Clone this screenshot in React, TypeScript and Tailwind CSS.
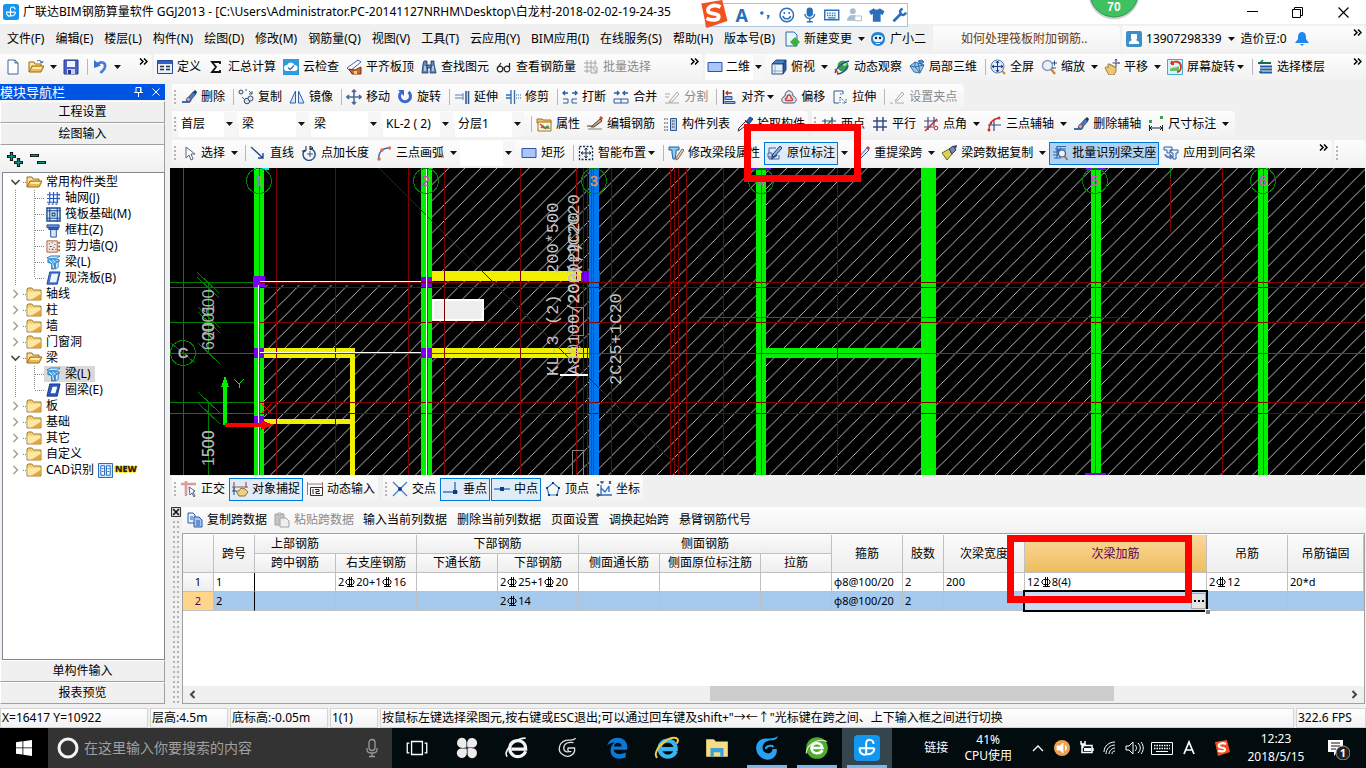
import type { ReactNode } from "react";

/* ---------- 16 × 16 icons ---------- */

const navy = "#1f3f7f";
const brush = (
  <g>
    <path d="M1 13h7l2-2" stroke="#3a6ea5" strokeWidth="2" fill="none" />
    <path d="M5 11l7-8 3 2-7 8z" fill="#4a7ab8" stroke={navy} strokeWidth=".8" />
    <path d="M5 11l2-3 3 2-2 3z" fill="#e8a0a0" stroke={navy} strokeWidth=".6" />
    <path d="M12 3l2-2 2 2-1 2z" fill="#203050" />
  </g>
);
const pencil = (
  <g>
    <path d="M5 12l8-9 2 2-8 8-3 1z" fill="#e8e8f4" stroke="#3a5a9a" strokeWidth="1" />
    <path d="M12 3l2-2 2 2-1 2z" fill="#d04030" />
  </g>
);
const beam = (
  <g stroke="#1b6fb8" strokeWidth=".9">
    <path d="M1 3l4-2h10l-4 3H2z" fill="#bfe0f8" />
    <path d="M2 5h12v2h-3l-2 3v5H6V9L2 8z" fill="#5aaee8" />
    <path d="M3 5l4 4M7 5l3 3M11 5l2 2M7 10l1.500 4" stroke="#fff" strokeWidth=".9" />
    <path d="M10 9l3-2v6l-3 2z" fill="#d8eefc" />
  </g>
);
const slab = (
  <g>
    <path d="M4 1h11l-3 13H1z" fill="#4a78d0" stroke="#20409a" />
    <path d="M6 3h7l-2 9H4z" fill="#eef5ff" />
  </g>
);
const folder = (
  <g>
    <path d="M1 4V3l1-1h4l1.500 2H15v10H1z" fill="#f3cf6e" stroke="#94702c" strokeWidth=".9" />
    <path d="M1.500 5.500H14.500V9L5 13.500H1.500z" fill="#fbe6a2" />
    <path d="M14.500 8v5.500H6z" fill="#e3a43a" />
  </g>
);
const folderOpen = (
  <g>
    <path d="M1 13V3h5l1 2h6v2" fill="#fbe39a" stroke="#9a6d1c" />
    <path d="M1 13l3-6h12l-3 6z" fill="#f0b94a" stroke="#9a6d1c" />
    <path d="M5 8h9l-1 2H4z" fill="#fdeeb5" />
  </g>
);
const sogou = (
  <g>
    <path d="M1 2l12-2 3 12-12 4z" fill="#f4511e" />
    <path d="M12 4C8 2 4 4 5 6.500c1 2 6 .5 6 3 0 2-4 2.500-7 1" fill="none" stroke="#fff" strokeWidth="2.200" />
  </g>
);
const ggj = (
  <g>
    <rect width="16" height="16" rx="2.500" fill="#1296f0" />
    <path d="M7.500 12.500V5c0-3 4.500-2.500 4.500.5M3 8.200h9.500M3.500 8.200c-.5 3.500 3 4.500 4 3.500 2 .5 5-.5 5-3.500" fill="none" stroke="#fff" strokeWidth="1.200" />
  </g>
);

const ICONS: Record<string, ReactNode> = {
  ggj,
  sogou,
  newdoc: <path d="M3 1h7l3 3v11H3zM10 1v3h3" fill="#fff" stroke="#3a62a0" />,
  open: (
    <g>
      {folderOpen}
      <path d="M9 2c2-1 4-1 5 2m0 0l-2-1m2 1l1-2" fill="none" stroke="#405a80" />
    </g>
  ),
  save: (
    <g>
      <path d="M1 1h14v14H1z" fill="#4a62c8" stroke="#26368c" />
      <path d="M4 2h8v6H4z" fill="#f0f4ff" />
      <path d="M4 10h8v5H4z" fill="#c8d2f4" />
      <path d="M5 11h3v4H5z" fill="#26368c" />
    </g>
  ),
  undo: (
    <g>
      <path d="M5 5.500C8 2 14 3 13 8c-.5 3-3 4-4.500 6" fill="none" stroke="#4a7ad8" strokeWidth="2.600" />
      <path d="M2 1v8l7-2.500z" fill="#3d6fd0" />
    </g>
  ),
  define: (
    <g>
      <path d="M.5 1.500h15v13H.5z" fill="#e6eefc" stroke="#24489c" />
      <path d="M1 2h14v3H1z" fill="#2f62c8" />
      <path d="M3 7.500h4M3 10.500h4M9 7.500h4M9 10.500h4" stroke="#333" strokeWidth="1.500" />
    </g>
  ),
  sigma: <path d="M12 5V3H4l4 5-4 5h8v-2" fill="none" stroke="#111" strokeWidth="1.800" />,
  cloud: (
    <g>
      <path d="M0 0h16v16H0z" fill="#2d9be0" />
      <path d="M4 12a3 3 0 010-6 4 4 0 017.500 0 3 3 0 010 6z" fill="#fff" />
      <path d="M5 8.500l2.200 2L11 6.500" fill="none" stroke="#2d7bc0" strokeWidth="1.400" />
    </g>
  ),
  aligntop: (
    <g>
      <path d="M1 9L12 1l3 2L4 12z" fill="#fff" stroke="#4464a8" />
      <path d="M3 10l6 1 6-3v7H6z" fill="#c86a3a" stroke="#7a2f14" />
      <path d="M8 12h3v3H8z" fill="#f8d058" />
    </g>
  ),
  find: (
    <g fill="#5f86c0" stroke="#1d3358" strokeWidth=".8">
      <path d="M3 2h3v3l1 9H1l1-9zM10 2h3v3l2 9H9l1-9z" />
      <path d="M6 6h4v3H6z" />
      <path d="M4 7v5M12 7v5" stroke="#e8f2ff" strokeWidth="1.200" />
    </g>
  ),
  glasses: (
    <g fill="none" stroke="#222" strokeWidth="1.200">
      <circle cx="4" cy="10" r="2.800" />
      <circle cx="11" cy="10" r="2.800" />
      <path d="M6.500 9h2M13.500 9V4M1.500 9L5 4" />
    </g>
  ),
  batch: (
    <g stroke="#a5a5a5" fill="none">
      <path d="M4 1v13M8 1v8M12 1v6M1 4h13M1 8h8M1 12h6" />
      <path d="M8 8h6v6H8z" fill="#eee" />
      <path d="M10 9l3 4" />
    </g>
  ),
  blueRect: <path d="M1 3.500h14v9H1z" fill="#a9c6f7" stroke="#2f55a8" />,
  cube: (
    <g stroke="#1f3f6f" strokeWidth=".9">
      <path d="M1 5l4-4h10l-3 4z" fill="#4585c0" />
      <path d="M12 5l3-4v10l-3 4z" fill="#2c5f95" />
      <path d="M1 5h11v10H1z" fill="#e6f0f8" />
      <path d="M4 5v10M1 12h11" fill="none" stroke="#88a4c0" />
    </g>
  ),
  orbit: (
    <g>
      <circle cx="9" cy="7" r="5.500" fill="#35a04c" />
      <circle cx="10.500" cy="5" r="2" fill="#a8e8a8" />
      <path d="M1 14c1-5 8-11 14-12M3 15c4 0 9-3 11-8" fill="none" stroke="#2c4f90" strokeWidth="1.300" />
      <path d="M1 10l3 4" stroke="#c04030" strokeWidth="1.500" />
    </g>
  ),
  local3d: (
    <g stroke="#2a64a0" strokeWidth=".9">
      <path d="M1 7l5-4 9 3-4 8-6-1z" fill="#9cc8ea" />
      <path d="M6 3v5l5 6M1 7l5 1 9-2M9 4l2 9" fill="none" />
      <path d="M9 2l4-1 2 2-3 2z" fill="#4d93cc" />
    </g>
  ),
  fullview: (
    <g>
      <circle cx="7.500" cy="7.500" r="6.500" fill="#dfe9fa" stroke="#5a7ab0" />
      <path d="M7.500 2v11M2 7.500h11M6 4l1.500-2L9 4M6 11l1.500 2L9 11M4 6L2 7.500 4 9M11 6l2 1.500L11 9" fill="none" stroke="#1c3c80" />
      <path d="M12 12l3 3" stroke="#c88a30" strokeWidth="2" />
    </g>
  ),
  zoom: (
    <g>
      <circle cx="6.500" cy="6.500" r="5" fill="#e8f0fa" stroke="#8a9ab8" strokeWidth="1.400" />
      <path d="M10 10l4 5" stroke="#c88a30" strokeWidth="2.400" />
      <path d="M11 4h5M13.500 1.500v5M11 9h4" stroke="#2c4f90" />
    </g>
  ),
  pan: (
    <g>
      <path d="M1 9c1-2 2-1 3 0V5h2v1h2v1h2v1h2v4l-2 4H5z" fill="#ecc878" stroke="#98742c" strokeWidth=".9" />
      <path d="M12 0v8M8.500 4h7M11 1.500L12 0l1 1.500M14.500 3l1 1-1 1" stroke="#405070" fill="none" />
    </g>
  ),
  screenrot: (
    <g>
      <path d="M.5.500h15v15H.5z" fill="#d8f2f8" stroke="#3ab0d0" />
      <path d="M3 10c3-3 6 0 9-3v5H3z" fill="#6ac060" />
      <path d="M4 5c3-4 10-3 10 3 0 3-2 5-4 5M4 5l1-3M4 5l3 0" fill="none" stroke="#e03020" strokeWidth="1.800" />
    </g>
  ),
  floors: (
    <g fill="none">
      <path d="M1 4h13" stroke="#1c6a4c" strokeWidth="2" />
      <path d="M3 7.500h12M3 10.500h12M3 13.500h12" stroke="#1d5fa8" strokeWidth="2" />
      <path d="M2 5l4-4M5 13l-3 0" stroke="#1c6a4c" strokeWidth="1.500" />
    </g>
  ),
  brush,
  copy: (
    <g fill="#dfe8f4" stroke="#31486a">
      <circle cx="3" cy="3" r="2" />
      <circle cx="9" cy="12" r="2.800" />
      <circle cx="12.500" cy="9.500" r="2.500" />
      <path d="M7 1h2M11 2l3 3M14 2v3h-3M4 8l2 2" fill="none" strokeWidth=".9" />
    </g>
  ),
  mirror: <path d="M6.500 2v12H1zM9.500 2v12H15z" fill="#dce9fb" stroke="#2d62b0" />,
  move: (
    <path d="M8 1v14M1 8h14M6 3l2-2 2 2M6 13l2 2 2-2M3 6L1 8l2 2M13 6l2 2-2 2" fill="none" stroke="#4a6a98" strokeWidth="1.600" />
  ),
  rotate: (
    <g>
      <path d="M4 3.500A5.500 5.500 0 1011.500 3" fill="none" stroke="#3f66d0" strokeWidth="3" />
      <path d="M1 1h6v6z" fill="#3f66d0" />
    </g>
  ),
  extend: (
    <g stroke="#2f5f9c" fill="none">
      <path d="M14.500 2v13M12 2v13" strokeWidth="1.600" />
      <path d="M1 6h8M1 9h8M9 4v7" stroke="#5f7fb0" />
    </g>
  ),
  trim: (
    <g stroke="#2f6fb0" fill="none">
      <path d="M6 1v14M9.500 1v14M1 6h5M1 9h5" strokeWidth="1.300" />
      <path d="M11 6h5M11 9h5" strokeDasharray="1 1" />
    </g>
  ),
  breakk: (
    <g fill="none" stroke="#2f5f9c">
      <path d="M1 10h5v4H1M15 10h-5v4h5" />
      <path d="M1 4h5M10 4h5M3 2L1 4l2 2M13 2l2 2-2 2" strokeWidth="1.400" />
    </g>
  ),
  merge: (
    <g fill="none" stroke="#2f5f9c">
      <path d="M1 10h14v4H1zM8 10v4" />
      <path d="M1 4h5M10 4h5M4 2l2 2-2 2M12 2l-2 2 2 2" strokeWidth="1.400" />
    </g>
  ),
  split: (
    <g fill="none" stroke="#a8a8a8">
      <path d="M1 5h5M1 8h4M1 14h14M5 13l8-10 2 2-7 8z" />
    </g>
  ),
  align: (
    <g>
      <path d="M2.500 1v14" stroke="#223" strokeWidth="1.400" />
      <path d="M4 7.500h7v3H4zM4 12.500h10v2H4z" fill="#9ab8e4" stroke="#2f5596" />
      <path d="M11 4H5M7 2L5 4l2 2" fill="none" stroke="#c03028" strokeWidth="1.300" />
    </g>
  ),
  offset: (
    <g fill="none">
      <path d="M3 14c-4-2-2-6 1-7 0-7 8-7 8 0 4 1 4 6 1 7z" fill="#dde4f2" stroke="#485878" />
      <path d="M5 11.500c-1-1-1-2 1-2.500 0-4 4-4 4 0 2 .5 2 2 1 2.500z" stroke="#d04438" strokeWidth="1.400" />
    </g>
  ),
  stretch: (
    <g fill="none" stroke="#2f5f9c">
      <path d="M11 2H2v12h5M11 2v3" />
      <path d="M8 5h3M8 8l6 6M8 8v6M14 10v4h-4" strokeDasharray="1.500 1" />
    </g>
  ),
  grip: (
    <g fill="none" stroke="#aaa">
      <path d="M1 14h3M6 14h9M6 12l7-9 2 2-7 7z" />
    </g>
  ),
  props: (
    <g>
      <path d="M1 3h5l1 1h8v3H1z" fill="#f6c860" stroke="#a8701c" />
      <path d="M2 6h13v9H2z" fill="#f8f4e4" stroke="#a8701c" />
      <path d="M4 12l3-3 2 2 3-2 2 4z" fill="#3a9a50" />
      <path d="M4 8l6 5" stroke="#c84838" strokeWidth="1.500" />
    </g>
  ),
  editbar: (
    <g>
      <path d="M1 13h14" stroke="#6c8c5c" />
      <path d="M0 10h5l8-7 2 2-8 6H4" fill="#b8a890" stroke="#5a4030" />
      <path d="M12 2l2-2 2 2-1 2z" fill="#d04030" />
    </g>
  ),
  complist: (
    <g>
      <path d="M8.500 2.500h6v12h-6z" fill="#b8ccec" stroke="#2f5596" />
      <path d="M2 3h4M2 7h4M2 11h4M2 14h4M10 5h3M10 8h3M10 11h3" stroke="#333" strokeDasharray="1.500 1" />
    </g>
  ),
  pick: (
    <g>
      <path d="M3 14L1 15l1-3 7-7 3 2z" fill="#e8f0fa" stroke="#333" />
      <path d="M8 4l5 5M9 6l4-5 3 2-4 5z" fill="#2f5fb0" stroke="#203a70" />
    </g>
  ),
  twopoint: (
    <g fill="none" stroke="#334a7a">
      <path d="M4 3v12M11 1v12M1 5h14M1 11h12" strokeWidth="1.200" />
      <path d="M3 12l9-9" stroke="#2a8a3a" strokeWidth="1.400" />
    </g>
  ),
  parallel: <path d="M5 1v14M11 1v14M1 5h14M1 11h14" fill="none" stroke="#3a4a86" strokeWidth="1.500" />,
  angle: (
    <g fill="none">
      <path d="M5 1v13M11 1v9M1 5h14M1 11h10" stroke="#3a4a86" strokeWidth="1.200" />
      <path d="M2 15L14 3" stroke="#c02828" strokeWidth="1.400" />
      <circle cx="13" cy="12" r="1.800" stroke="#c02828" />
    </g>
  ),
  arcaxis: (
    <g fill="none">
      <path d="M8 4v11M2 9h13" stroke="#3a4a86" strokeWidth="1.200" />
      <path d="M3 14C3 7 6 3 13 2" stroke="#c83028" strokeWidth="1.400" />
      <g fill="#c83028">
        <circle cx="3" cy="14" r="1.500" />
        <circle cx="5" cy="7" r="1.300" />
        <circle cx="13" cy="2" r="1.500" />
      </g>
    </g>
  ),
  dim: (
    <g>
      <path d="M1 4h3v3H1zM12 0h3v3h-3z" fill="#3aa04a" />
      <path d="M1.500 9v6M14.500 9v6M2 12h12M4 10l-2 2 2 2M12 10l2 2-2 2" fill="none" stroke="#222" />
    </g>
  ),
  cursor: <path d="M5 2v11l3-3 2 5 2-1-2-5h4z" fill="#fff" stroke="#56657a" />,
  line: <path d="M1 2l12 11M13 8v5H8" fill="none" stroke="#234a8c" strokeWidth="1.400" />,
  pointlen: (
    <g fill="none" stroke="#2c5590">
      <path d="M4 5a6 6 0 105-1.500" strokeWidth="1.500" />
      <path d="M9 6v6M6 9h6" />
      <path d="M1 6h4V1M9 1v4l3-2z" stroke="#123" />
    </g>
  ),
  arc: (
    <g fill="none">
      <path d="M3 14C2 8 6 3 13 3" stroke="#3a6ab0" strokeWidth="1.400" />
      <g fill="#e06a4a">
        <circle cx="3" cy="14" r="1.700" />
        <circle cx="6" cy="5" r="1.700" />
        <circle cx="13.500" cy="3" r="1.700" />
      </g>
    </g>
  ),
  smart: (
    <g fill="none" stroke="#1a2c50">
      <path d="M1.500 1.500h13v13h-13z" strokeDasharray="2 1.500" strokeWidth="1.300" />
      <path d="M8 3v10M3 8h10M6.500 5L8 3l1.500 2M6.500 11L8 13l1.500-2M5 6.500L3 8l2 1.500M11 6.500L13 8l-2 1.500" />
    </g>
  ),
  editprop: (
    <g>
      <path d="M1 2h10v3H8v3l-1 6H5L4 8V5H1z" fill="#8ad0f4" stroke="#205a9a" />
      <path d="M8 13l6-9 2 1-6 9-2 1z" fill="#f0d4b0" stroke="#6a4030" strokeWidth=".8" />
    </g>
  ),
  insitu: (
    <g>
      <path d="M2 3h7M2 3v11h10v-4" fill="#dfe8f8" stroke="#4a6298" />
      <path d="M1 8h4v4H1z" fill="#c4d6f0" stroke="#4a6298" />
      <path d="M6 9l7-8 2 2-7 8-3 1z" fill="#7ab4e8" stroke={navy} />
      <path d="M4 14l6-4" stroke="#334a80" strokeWidth="1.600" />
    </g>
  ),
  repick: pencil,
  spanCopy: (
    <g>
      <path d="M1 8l7-4 3 5-5 6z" fill="#d8d060" stroke="#6c6820" />
      <path d="M8 4l4-3 3 4-4 4z" fill="#7a86b0" stroke="#333a60" />
      <path d="M12 1l4-1-1 4z" fill="#3a3a60" />
    </g>
  ),
  recog: (
    <g fill="none">
      <path d="M5 1.500h9M3 4h11M1 7h5M1 10h5M2 13h7M5 1v12M5 7L9 3" stroke="#2c6ab0" strokeWidth="1.200" />
      <circle cx="10" cy="8.500" r="3.500" fill="#e8f2fc" stroke="#405a80" strokeWidth="1.200" />
      <path d="M12.500 11l3 4" stroke="#b07028" strokeWidth="1.800" />
    </g>
  ),
  applyTo: (
    <g>
      <path d="M1 2h8v3H7v3H4V5H1zM8 5h7v3h-2v6h-3V8H8z" fill="#e8f4fc" stroke="#2a62a4" />
      <path d="M2 9c0 3 2 4 5 3M7 9v5l3-2z" fill="#6a8ac8" stroke="#4a68a8" />
    </g>
  ),
  ortho: (
    <g>
      <path d="M0 3h15M5 0v15" stroke="#dc9c9c" strokeWidth="2.600" />
      <path d="M8 6l6 4-2 1 2 4-1 1-2-4-2 2z" fill="#fff" stroke="#4a6484" />
    </g>
  ),
  snap: (
    <g>
      <path d="M2 1v9M14 1v6M0 6h16" stroke="#9a5c5c" strokeWidth="1.200" />
      <path d="M4 10l3 0 2-3 4 1 3 3-3 4H7z" fill="#efcf88" stroke="#907030" />
      <path d="M2 6v8M0 10h4" stroke="#205080" />
    </g>
  ),
  dynin: (
    <g>
      <path d="M.5 1v13M15.500 1v6M1 3h14" stroke="#a07878" fill="none" />
      <path d="M3.500 6.500h12v8h-12z" fill="#fff" stroke="#333" />
      <path d="M6 8v5M8 8.500h4v2H9v2h4" stroke="#222" fill="none" />
    </g>
  ),
  cross: (
    <g>
      <path d="M1 1l14 14M15 1L1 15" stroke="#3a7ac8" strokeWidth="1.200" />
      <circle cx="8" cy="8" r="2" fill="#123c80" />
    </g>
  ),
  perp: (
    <g>
      <path d="M12 1v10M0 11h15" stroke="#3a7ac8" strokeWidth="1.500" />
      <path d="M10 9h4v4h-4z" fill="#123c80" />
    </g>
  ),
  mid: (
    <g>
      <path d="M0 8h16" stroke="#3a7ac8" strokeWidth="1.500" />
      <path d="M6 6h4v4H6z" fill="#123c80" />
    </g>
  ),
  vertex: (
    <g>
      <path d="M8 2l6 5-2 7H4L2 7z" fill="none" stroke="#3a7ac8" strokeWidth="1.200" />
      <path d="M7 1h2v2H7zM1 6h2v2H1zM13 6h2v2h-2zM3 13h2v2H3zM11 13h2v2h-2z" fill="#123c80" />
    </g>
  ),
  coord: (
    <g fill="none" stroke="#2a6ac0">
      <path d="M5 4v11M2 14h14M5 7l4 4 4-6M13 5v6" strokeWidth="1.300" />
      <path d="M1 3l1 2 1-2M13 0l2 3M15 0l-2 3M1 13h2v2H1zM5 0h2v2H5z" stroke="#222" strokeWidth=".9" />
    </g>
  ),
  copydoc: (
    <g stroke="#2a58a8">
      <path d="M1 1h5l2 2v8H1z" fill="#e4efff" />
      <path d="M7 5h5l3 3v7H7z" fill="#a8c8f4" />
      <path d="M9 9h4M9 11h4M9 13h4M3 5h3M3 7h3" />
    </g>
  ),
  paste: (
    <g stroke="#a4a4a4">
      <path d="M1 2h9v11H1z" fill="#c4c4c4" />
      <path d="M4 1h3v2H4zM6 6h6l3 3v6H6z" fill="#eee" />
    </g>
  ),
  newchange: (
    <g>
      <path d="M2 1h8l3 3v11H2z" fill="#eaf5ff" stroke="#2a6aa8" />
      <path d="M11 6l2.500 2.500L11 11 8.500 8.500zM11 11l2.500 2.500L11 16l-2.500-2.500zM8.500 8.500L11 11l-2.500 2.500L6 11zM13.500 8.500L16 11l-2.500 2.500L11 11z" fill="#3fae3c" />
    </g>
  ),
  mascot: (
    <g>
      <path d="M8 1c5 0 7 3 7 7s-3 7-7 7-7-3-7-7 2-7 7-7z" fill="#1f86d8" />
      <path d="M3 7c0-4 10-4 10 0s-2 4-5 4-5 0-5-4z" fill="#e8f4ff" />
      <circle cx="6" cy="7" r="1.200" fill="#123" />
      <circle cx="10" cy="7" r="1.200" fill="#123" />
      <path d="M6 12.500h4" stroke="#fff" />
    </g>
  ),
  user: (
    <g>
      <rect width="16" height="16" rx="2" fill="#3d8fc8" />
      <path d="M5 3h6v5l-1 1 3 2v2H3v-2l3-2-1-1z" fill="#fff" />
    </g>
  ),
  bell: <path d="M8 1c4 0 4 4 4 7l3 4H1l3-4c0-3 0-7 4-7zM6 13h4l-2 2z" fill="#1e88f0" />,
  axisnet: (
    <path d="M4 1v12M8 1v12M12 1v12M1 4h14M1 8h14M1 12h12M2 14h2M6 14h2M10 14h2M14 3v2M14 7v2" fill="none" stroke="#2a58c0" strokeWidth="1.300" />
  ),
  raft: (
    <g fill="none" stroke="#1d4c90">
      <path d="M1 1h14v14H1z" fill="#d4e8fc" strokeWidth="1.500" />
      <path d="M4 4h8v8H4zM6.500 6.500h3v3h-3zM1 4h3M12 4h3M1 12h3M12 12h3M4 1v3M12 1v3M4 12v3M12 12v3" strokeWidth="1.200" />
    </g>
  ),
  column: (
    <g stroke="#2a4a90">
      <path d="M1 2h13v3H1z" fill="#6090e0" />
      <path d="M5 5h6v10H5z" fill="#d8e6fc" />
      <path d="M3 5h10v2H3z" fill="#3860b8" />
    </g>
  ),
  shear: (
    <g>
      <path d="M1 2h11v12H1z" fill="#f4e8e0" stroke="#a85838" />
      <path d="M3 5h1M6 4h1M9 6h1M4 8h2M8 9h1M3 11h1M6 11h2M10 11h1" stroke="#333" />
      <path d="M14 3v2M14 7v2M14 11v2" stroke="#b86020" strokeWidth="2" />
    </g>
  ),
  beam,
  slab,
  ringbeam: (
    <g>
      <path d="M4 1h11l-3 13H1z" fill="#2a58b8" stroke="#183880" />
      <path d="M7 4h5l-2 7H5z" fill="#fff" />
    </g>
  ),
  folder,
  folderOpen,
  cad: (
    <g>
      <path d="M.5.500h15v15H.5z" fill="#d0e8ff" stroke="#1a60b8" />
      <path d="M3 3h4v10H3zM9 3h4v10H9z" fill="#fff" stroke="#1a60b8" />
      <path d="M4 6h2M4 9h2M10 6h2M10 9h2" stroke="#1a60b8" />
    </g>
  ),
};

function Icon({ name, size = "h-4 w-4" }: { name: string; size?: string }) {
  return (
    <svg viewBox="0 0 16 16" className={`${size} shrink-0`} aria-hidden="true">
      {ICONS[name]}
    </svg>
  );
}

/* ---------- toolbar parts ---------- */

type Drop = "split" | "menu";

function Tri() {
  return (
    <svg viewBox="0 0 7 4" className="h-1 w-[7px] shrink-0" aria-hidden="true">
      <path d="M0 0h7L3.500 4z" fill="#111" />
    </svg>
  );
}

function Tool({
  icon,
  label,
  drop,
  state = "normal",
  children,
}: {
  icon?: string;
  label?: string;
  drop?: Drop;
  state?: "normal" | "checked" | "pressed" | "disabled";
  children?: ReactNode;
}) {
  const look = {
    normal: "",
    checked: "bg-[#dfebf6] ring-1 ring-inset ring-[#0078d7]",
    pressed: "bg-[#afd2f2] ring-1 ring-inset ring-[#0078d7]",
    disabled: "text-[#8a8a8a]",
  }[state];
  return (
    <div className="relative flex shrink-0 items-center">
      <button
        type="button"
        aria-label={label ?? icon}
        disabled={state === "disabled"}
        className={`flex h-[23px] items-center gap-1 whitespace-nowrap px-[3px] ${look}`}
      >
        {icon && <Icon name={icon} />}
        {label && <span>{label}</span>}
        {drop === "menu" && (
          <span className="-ml-0.5 w-[7px]">
            <Tri />
          </span>
        )}
      </button>
      {drop === "split" && (
        <button type="button" aria-label="▾" className="flex h-[23px] w-3 items-center pl-[3px]">
          <Tri />
        </button>
      )}
      {children}
    </div>
  );
}

function Sep() {
  return <span className="h-4 w-[5px] shrink-0 border-r border-[#b8b8b8]" />;
}

function Grip() {
  return (
    <span className="flex w-[3px] shrink-0 flex-col gap-0.5">
      {[0, 1, 2, 3].map((i) => (
        <span key={i} className="h-0.5 w-0.5 bg-[#b4b4b4]" />
      ))}
    </span>
  );
}

function Chevron() {
  return (
    <svg viewBox="0 0 9 7" className="mb-3 ml-auto mr-1 h-[7px] w-[9px] shrink-0" aria-hidden="true">
      <path d="M1 .5l3 3-3 3M5 .5l3 3-3 3" fill="none" stroke="#000" strokeWidth="1.500" />
    </svg>
  );
}

function Combo({ value, width, icon }: { value: string; width: string; icon?: string }) {
  return (
    <label className={`relative mr-0.5 flex h-[25px] shrink-0 items-center bg-white ${width}`}>
      {icon && (
        <span className="ml-0.5">
          <Icon name={icon} />
        </span>
      )}
      <select
        aria-label={value || "▾"}
        className="h-full w-full appearance-none bg-transparent pl-[3px] pr-3 text-xs outline-none"
      >
        <option>{value}</option>
      </select>
      <span className="pointer-events-none absolute inset-y-0 right-0 flex w-3 items-center bg-[#f6f6f6] pl-0.5">
        <Tri />
      </span>
    </label>
  );
}

function Bar({ className = "", children }: { className?: string; children: ReactNode }) {
  return (
    <div
      role="toolbar"
      className={`flex h-[26px] shrink-0 items-center gap-px rounded-r bg-linear-to-b from-[#fdfdfd] to-[#f2f2f2] ${className}`}
    >
      {children}
    </div>
  );
}

/* ---------- title and menu ---------- */

function TitleBar() {
  return (
    <header className="relative flex h-6 shrink-0 items-center bg-white">
      <span className="ml-[3px] mr-1">
        <Icon name="ggj" />
      </span>
      <h1 className="whitespace-nowrap text-xs">
        广联达BIM钢筋算量软件 GGJ2013 - [C:\Users\Administrator.PC-20141127NRHM\Desktop\白龙村-2018-02-02-19-24-35
      </h1>
      <div className="absolute left-[705px] top-[3px] flex h-6 w-[203px] items-center gap-[7px] border border-[#a9c5de] bg-white pl-7 text-[#2a6fbb]">
        <span className="w-4 text-center text-lg font-bold leading-none">A</span>
        <svg viewBox="0 0 16 16" className="h-4 w-4" fill="currentColor">
          <circle cx="5" cy="6" r="1.800" />
          <path d="M10 8h3c0 3-1 4-3 5 1-2 1-3 0-5z" />
        </svg>
        <svg viewBox="0 0 16 16" className="h-4 w-4" fill="none" stroke="currentColor" strokeWidth="1.500">
          <circle cx="8" cy="8" r="7" />
          <path d="M4 9c1 4 7 4 8 0M5.500 5v2M10.500 5v2" />
        </svg>
        <svg viewBox="0 0 16 16" className="h-4 w-4" fill="none" stroke="currentColor" strokeWidth="1.500">
          <rect x="5.500" y="1" width="5" height="8" rx="2.500" fill="currentColor" />
          <path d="M3 7c0 6 10 6 10 0M8 12v3M5 15h6" />
        </svg>
        <svg viewBox="0 0 16 16" className="h-4 w-4" fill="none" stroke="currentColor">
          <path d="M.8 3h14.400v10H.8z" strokeWidth="1.500" />
          <path d="M3 6h10M3 8.500h10" strokeDasharray="1.500 1" strokeWidth="1.400" />
          <path d="M4 11h8" strokeWidth="1.300" />
        </svg>
        <svg viewBox="0 0 16 16" className="h-4 w-4" fill="#a8bcd2">
          <circle cx="6" cy="4" r="3" />
          <path d="M0 14c0-8 12-8 12 0z" />
          <path d="M8 9h7v5H8z" fill="#fff" stroke="#a8bcd2" />
        </svg>
        <svg viewBox="0 0 16 16" className="h-4 w-4" fill="currentColor">
          <path d="M5 1c1 2 5 2 6 0l5 3-2 4-2-1v8H4V7L2 8 0 4z" />
        </svg>
        <svg viewBox="0 0 16 16" className="h-4 w-4" fill="none" stroke="currentColor">
          <path d="M1.500 14.500L9 7" strokeWidth="2.800" />
          <path d="M11 1.500c-3 1-3 3-2 5s4 2 5.500-1" strokeWidth="2.600" />
        </svg>
      </div>
      <div className="absolute left-[699px] top-0">
        <Icon name="sogou" size="h-[28px] w-[29px]" />
      </div>
      <div className="absolute right-[224px] top-0 flex h-6 w-14 justify-center">
        <svg viewBox="0 0 56 24" className="absolute inset-0 h-6 w-14">
          <circle cx="28" cy="-6" r="25.500" fill="#d2d2d2" />
          <circle cx="28" cy="-7" r="24" fill="#3fc162" stroke="#2a9a4a" />
        </svg>
        <span className="relative font-[Liberation_Sans] text-xs font-bold leading-[14px] text-white">70</span>
      </div>
      <div className="ml-auto flex items-center">
        <button type="button" aria-label="−" className="flex w-[46px] justify-center">
          <svg viewBox="0 0 11 11" className="h-[11px] w-[11px]" fill="none" stroke="#000">
            <path d="M0 4.500h11" />
          </svg>
        </button>
        <button type="button" aria-label="❐" className="flex w-[45px] justify-center">
          <svg viewBox="0 0 11 11" className="h-[11px] w-[11px]" fill="none" stroke="#000">
            <path d="M.5 2.500h8v8h-8zM2.500 2.500v-2h8v8h-2" />
          </svg>
        </button>
        <button type="button" aria-label="✕" className="flex w-[46px] justify-center">
          <svg viewBox="0 0 11 11" className="h-[11px] w-[11px]" fill="none" stroke="#000" strokeWidth="1.200">
            <path d="M.5.500l10 10M10.500.500l-10 10" />
          </svg>
        </button>
      </div>
    </header>
  );
}

const MENUS = [
  "文件(F)", "编辑(E)", "楼层(L)", "构件(N)", "绘图(D)", "修改(M)", "钢筋量(Q)",
  "视图(V)", "工具(T)", "云应用(Y)", "BIM应用(I)", "在线服务(S)", "帮助(H)", "版本号(B)",
];

function MenuBar() {
  return (
    <nav className="flex h-[29px] shrink-0 items-center">
      <div className="flex items-center gap-[11px] pl-[7px] pr-1.5">
        {MENUS.map((m) => (
          <button type="button" key={m} className="whitespace-nowrap">
            {m}
          </button>
        ))}
      </div>
      <Tool icon="newchange" label="新建变更" drop="split" />
      <Tool icon="mascot" label="广小二" />
      <Bar className="ml-1 w-[187px] pl-7">
        <a href="#help" className="whitespace-nowrap text-[#6b3a10]">
          如何处理筏板附加钢筋..
        </a>
      </Bar>
      <Bar className="ml-0.5 min-w-0 flex-1 pl-px">
        <Tool icon="user" label="13907298339" drop="split" />
        <Tool label="造价豆:0" />
        <Tool icon="bell" />
        <Chevron />
      </Bar>
    </nav>
  );
}

function MainBars() {
  return (
    <div className="flex h-[31px] shrink-0 items-start gap-0.5 overflow-hidden pt-px">
      <Bar className="w-[152px] pl-0.5">
        <Tool icon="newdoc" />
        <Tool icon="open" drop="split" />
        <Tool icon="save" />
        <Sep />
        <Tool icon="undo" drop="split" />
        <Chevron />
      </Bar>
      <Bar className="w-[549px]">
        <Tool icon="define" label="定义" />
        <Tool icon="sigma" label="汇总计算" />
        <Tool icon="cloud" label="云检查" />
        <Tool icon="aligntop" label="平齐板顶" />
        <Tool icon="find" label="查找图元" />
        <Tool icon="glasses" label="查看钢筋量" />
        <Tool icon="batch" label="批量选择" state="disabled" />
        <Chevron />
      </Bar>
      <Bar className="min-w-0 flex-1">
        <Combo value="二维" width="w-[60px]" icon="blueRect" />
        <Tool icon="cube" label="俯视" drop="split" />
        <Tool icon="orbit" label="动态观察" />
        <Tool icon="local3d" label="局部三维" />
        <Sep />
        <Tool icon="fullview" label="全屏" />
        <Tool icon="zoom" label="缩放" drop="split" />
        <Tool icon="pan" label="平移" drop="split" />
        <Tool icon="screenrot" label="屏幕旋转" drop="menu" />
        <Sep />
        <Tool icon="floors" label="选择楼层" />
        <Chevron />
      </Bar>
    </div>
  );
}

/* ---------- navigation panel ---------- */

type Node = { label: string; icon: string; level: 0 | 1; open?: boolean; last?: boolean; selected?: boolean };

const TREE: Node[] = [
  { label: "常用构件类型", icon: "folderOpen", level: 0, open: true },
  { label: "轴网(J)", icon: "axisnet", level: 1 },
  { label: "筏板基础(M)", icon: "raft", level: 1 },
  { label: "框柱(Z)", icon: "column", level: 1 },
  { label: "剪力墙(Q)", icon: "shear", level: 1 },
  { label: "梁(L)", icon: "beam", level: 1 },
  { label: "现浇板(B)", icon: "slab", level: 1, last: true },
  { label: "轴线", icon: "folder", level: 0 },
  { label: "柱", icon: "folder", level: 0 },
  { label: "墙", icon: "folder", level: 0 },
  { label: "门窗洞", icon: "folder", level: 0 },
  { label: "梁", icon: "folderOpen", level: 0, open: true },
  { label: "梁(L)", icon: "beam", level: 1, selected: true },
  { label: "圈梁(E)", icon: "ringbeam", level: 1, last: true },
  { label: "板", icon: "folder", level: 0 },
  { label: "基础", icon: "folder", level: 0 },
  { label: "其它", icon: "folder", level: 0 },
  { label: "自定义", icon: "folder", level: 0 },
  { label: "CAD识别", icon: "folder", level: 0 },
];

function TreeRow({ node }: { node: Node }) {
  if (node.level === 1) {
    return (
      <li className="flex h-4 items-center whitespace-nowrap">
        <svg viewBox="0 0 41 16" className="h-4 w-[41px] shrink-0" fill="none" stroke="#888" strokeDasharray="1 1">
          <path d={node.last ? "M12.500 0v16M31.500 0v8M32 8.500h9" : "M12.500 0v16M31.500 0v16M32 8.500h9"} />
        </svg>
        <span className={`flex h-4 items-center gap-1 pl-0.5 pr-1 ${node.selected ? "bg-[#d9d9d9]" : ""}`}>
          <Icon name={node.icon} size="h-[15px] w-[15px]" />
          {node.label}
        </span>
      </li>
    );
  }
  return (
    <li className="flex h-4 items-center whitespace-nowrap">
      <svg viewBox="0 0 23 16" className="h-4 w-[23px] shrink-0" fill="none">
        {node.open ? (
          <path d="M8.500 6l4 4 4-4" stroke="#444" strokeWidth="1.600" />
        ) : (
          <path d="M10.500 4l4 4-4 4" stroke="#a0a0a0" strokeWidth="1.500" />
        )}
        <path d="M20 8.500h3" stroke="#888" strokeDasharray="1 1" />
      </svg>
      <Icon name={node.icon} />
      <span className="pl-1">{node.label}</span>
      {node.label.startsWith("CAD") && (
        <span className="flex items-center gap-0.5 pl-1">
          <Icon name="cad" size="h-[15px] w-[15px]" />
          <b className="mb-1 text-[9px] font-black leading-[9px] text-[#222] [text-shadow:1px_0_#ffe000,-1px_0_#ffe000,0_1px_#ffe000,0_-1px_#ffe000]">
            NEW
          </b>
        </span>
      )}
    </li>
  );
}

function NavButton({ children }: { children: ReactNode }) {
  return (
    <button
      type="button"
      className="h-[22px] w-full shrink-0 border border-[#a0a0a0] border-l-white border-t-white bg-[#f0f0f0] text-center"
    >
      {children}
    </button>
  );
}

function NavPanel() {
  return (
    <aside className="flex w-[165px] shrink-0 flex-col bg-[#f0f0f0]">
      <div className="flex h-4 shrink-0 items-center bg-[#0054e3] text-[13px] leading-4 text-white">
        <h2>模块导航栏</h2>
        <svg viewBox="0 0 28 10" className="ml-auto mr-1 h-[10px] w-7" fill="none" stroke="#fff">
          <path d="M3 .500h5v5H3zM1 5.500h9M5.500 6v4M7.500 1v5M19.500 1.500l7 7M26.500 1.500l-7 7" />
        </svg>
      </div>
      <div className="flex flex-col pt-px">
        <NavButton>工程设置</NavButton>
        <NavButton>绘图输入</NavButton>
      </div>
      <div className="flex h-[27px] shrink-0 items-center border-r border-[#a0a0a0] bg-linear-to-b from-[#fcfcfc] to-[#f0f0f0] pl-[7px]">
        <svg viewBox="0 0 40 16" className="h-4 w-10" fill="none">
          <path d="M0 5.500h9M4.500 1v9M7 11.500h9M11.500 7v9M23 4.500h9M30 11.500h9" stroke="#111" strokeWidth="3.200" />
          <path d="M1 5.500h7M4.500 2v7M8 11.500h7M11.500 8v7M24 4.500h7M31 11.500h7" stroke="#00968a" strokeWidth="1.400" />
        </svg>
      </div>
      <ul className="ml-0.5 min-h-0 flex-1 overflow-hidden border border-[#828790] bg-white pt-px">
        {TREE.map((n, i) => (
          <TreeRow key={i} node={n} />
        ))}
      </ul>
      <div className="flex flex-col">
        <NavButton>单构件输入</NavButton>
        <NavButton>报表预览</NavButton>
      </div>
    </aside>
  );
}

/* ---------- drawing canvas ---------- */

const DARK_V = [106, 165, 238, 274, 350, 406, 413, 417, 441, 500, 504, 508, 516, 553, 667, 1052];
const H_LINES = [114, 119, 154, 234, 245];
const AXES: [number, string, string][] = [
  [89, "1", "#a878b8"], [256, "2", "#c050c0"], [424, "3", "#e09050"],
  [591, "4", "#d050d0"], [925, "5", "#d050d0"], [1093, "6", "#d050d0"],
];
const TICKS = [[27, 104], [27, 109], [28, 139], [28, 144], [28, 175], [28, 224], [28, 235]];

function Canvas() {
  return (
    <svg className="min-h-0 w-full flex-1 bg-black" shapeRendering="crispEdges">
      <defs>
        <pattern id="hatch" width="16.1" height="16.1" patternUnits="userSpaceOnUse" x="5">
          <path d="M0 16.100L16.100 0" stroke="#c4c4c4" strokeWidth="1" />
        </pattern>
      </defs>
      <rect x="94" y="117" width="157" height="100%" fill="url(#hatch)" />
      <rect x="262" y="0" width="100%" height="100%" fill="url(#hatch)" />

      <g fill="#f0f000">
        <rect x="262" y="103" width="150" height="10" />
        <rect x="262" y="180" width="157" height="10" />
        <rect x="94" y="180" width="91" height="10" />
        <rect x="180" y="180" width="5" height="100%" />
        <rect x="94" y="251" width="90" height="5" />
      </g>
      <g fill="#00f000">
        <rect x="84" y="0" width="10" height="100%" />
        <rect x="251" y="0" width="11" height="100%" />
        <rect x="586" y="0" width="10" height="100%" />
        <rect x="751" y="0" width="15" height="100%" />
        <rect x="921" y="0" width="10" height="100%" />
        <rect x="1088" y="0" width="10" height="100%" />
        <rect x="596" y="180" width="155" height="10" />
      </g>
      <g fill="#7a00f0">
        <rect x="83" y="108" width="12" height="11" />
        <rect x="84" y="180" width="10" height="10" />
        <rect x="84" y="248" width="10" height="8" />
        <rect x="251" y="109" width="11" height="10" />
        <rect x="251" y="180" width="11" height="10" />
        <rect x="411" y="103" width="19" height="11" />
        <rect x="581" y="0" width="20" height="2" />
        <rect x="916" y="0" width="20" height="2" />
        <rect x="915" y="305" width="21" height="2" />
      </g>
      <rect x="419" y="0" width="10" height="100%" fill="#0078f0" />
      <rect x="84" y="0" width="15" height="2" fill="#00f0f0" />
      <rect x="263" y="132" width="50" height="20" fill="#eee" stroke="#fff" strokeWidth="2" />

      <g fill="#800000">
        {DARK_V.map((x) => (
          <rect key={x} x={x} y="0" width="1" height="100%" />
        ))}
        {H_LINES.map((y) => (
          <rect key={y} x="89" y={y} width="100%" height="1" />
        ))}
        <rect x="757" y="149" width="202" height="1" />
        <rect x="1000" y="10" width="1" height="54" />
      </g>
      <path d="M209 0l307 307" stroke="#800000" />
      <g fill="#f00000">
        <rect x="89" y="0" width="1" height="100%" />
        <rect x="257" y="0" width="1" height="100%" />
        <rect x="421" y="0" width="1" height="100%" />
        <rect x="423" y="0" width="1" height="100%" />
        <rect x="591" y="0" width="1" height="100%" />
        <rect x="925" y="0" width="1" height="100%" />
        <rect x="1093" y="0" width="1" height="100%" />
        <rect x="89" y="185" width="100%" height="1" />
      </g>
      <g fill="#fff">
        <rect x="88" y="117" width="1" height="100%" />
        <rect x="256" y="0" width="1" height="100%" />
        <rect x="90" y="113" width="161" height="1" />
        <rect x="90" y="184" width="161" height="1" />
        <rect x="390" y="206" width="28" height="2" />
      </g>
      <g fill="#008000">
        {H_LINES.map((y) => (
          <rect key={y} x="0" y={y} width="84" height="1" />
        ))}
        <rect x="0" y="185" width="84" height="1" />
        <rect x="13" y="0" width="1" height="100%" />
        <rect x="38" y="114" width="1" height="72" />
        <rect x="38" y="235" width="1" height="100%" />
        <rect x="529" y="149" width="228" height="1" />
        <rect x="1000" y="0" width="1" height="10" />
      </g>
      <g fill="none" stroke="#008000">
        {TICKS.map(([x, y]) => (
          <path key={y} d={`M${x} ${y}l22 21`} />
        ))}
        {AXES.map(([x]) => (
          <circle key={x} cx={x} cy="13" r="12.500" />
        ))}
        <circle cx="13" cy="185" r="12.500" />
        <path d="M1 175l24 20" />
      </g>
      <g fill="none" stroke="#808080">
        <path d="M402.500 139.500h11v28h-11zM402.500 282.500h11v40h-11z" />
      </g>

      <g fontFamily="Liberation Sans" fontSize="14" textAnchor="middle">
        {AXES.map(([x, n, c]) => (
          <text key={n} x={x} y="18" fill={c} stroke={c} strokeWidth=".5">
            {n}
          </text>
        ))}
        <text x="13" y="190" fill="#c0c0c0" stroke="#c0c0c0" strokeWidth=".5">
          C
        </text>
      </g>
      <g fontFamily="Liberation Mono" fontSize="17" fill="#c4c4c4">
        <text transform="translate(388 208) rotate(-90)">{"KL-3\u00a0(2)\u00a0\u00a0200*500"}</text>
        <text transform="translate(409 207) rotate(-90)">{"A8@100/200(2)"}</text>
        <text transform="translate(409 136) rotate(-90)">{"2C20;2C20"}</text>
        <text transform="translate(409 108) rotate(-90)">{")+1C2C20"}</text>
        <text transform="translate(451 217) rotate(-90)">{"2C25+1C20"}</text>
      </g>
      <g fontFamily="Liberation Sans" fontSize="16" fill="#b0b0b0">
        <text transform="translate(44 182) rotate(-90)">{"600"}</text>
        <text transform="translate(44 172) rotate(-90)">{"2001"}</text>
        <text transform="translate(44 148) rotate(-90)">{"600"}</text>
        <text transform="translate(44 298) rotate(-90)">{"1500"}</text>
        <text transform="translate(44 289) rotate(-90)">{"500"}</text>
      </g>

      <rect x="53" y="218" width="4" height="39" fill="#00f000" />
      <path d="M51 219l4-11 4 11z" fill="#00f000" />
      <rect x="55" y="255" width="38" height="4" fill="#f00" />
      <path d="M91 252l13 5-13 5z" fill="#f00" />
      <path d="M64 211l5 5 5-5M69 216v4" fill="none" stroke="#00f000" />
      <path d="M92 236l9 9M101 236l-9 9" fill="none" stroke="#f00" />
    </svg>
  );
}

/* ---------- in-place table ---------- */

function Rebar() {
  return (
    <svg viewBox="0 0 12 10" className="mb-[3px] inline-block h-[10px] w-3 align-middle" fill="none" stroke="#000">
      <path d="M3.500 2.500h5l1.500 1.500v2l-1.500 1.500h-5L2 6V4zM5.500 0v9M7.500 0v9M3 9.500h7" />
    </svg>
  );
}

const TH = "border-b border-r border-[#c0c0c0] bg-linear-to-b from-[#fbfbfb] to-[#eeeeee] p-0 font-normal";
const TD = "whitespace-nowrap border-b border-r border-[#c0c0c0] p-0 pl-0.5 text-[11px] leading-[18px]";

function SpanTable() {
  return (
    <table className="w-full table-fixed border-separate border-spacing-0 text-xs leading-[18px]">
      <colgroup>
        <col className="w-[31px]" />
        <col className="w-[41px]" />
        <col className="w-[81px]" />
        <col className="w-[81px]" />
        <col className="w-[81px]" />
        <col className="w-[81px]" />
        <col className="w-[81px]" />
        <col className="w-[101px]" />
        <col className="w-[71px]" />
        <col className="w-[71px]" />
        <col className="w-[41px]" />
        <col className="w-[81px]" />
        <col className="w-[182px]" />
        <col className="w-[81px]" />
        <col />
      </colgroup>
      <thead>
        <tr className="h-[19px]">
          <th rowSpan={2} className={TH} />
          <th rowSpan={2} className={TH}>跨号</th>
          <th colSpan={2} className={`${TH} pl-4 text-left`}>上部钢筋</th>
          <th colSpan={2} className={TH}>下部钢筋</th>
          <th colSpan={3} className={TH}>侧面钢筋</th>
          <th rowSpan={2} className={TH}>箍筋</th>
          <th rowSpan={2} className={TH}>肢数</th>
          <th rowSpan={2} className={TH}>次梁宽度</th>
          <th
            rowSpan={2}
            className="relative border-b border-r border-[#c0c0c0] bg-linear-to-b from-[#fbd89a] to-[#eebd5c] p-0 font-normal text-[#5a005a]"
          >
            次梁加筋
            <span className="pointer-events-none absolute -left-[18px] top-0 z-20 h-[68px] w-[185px] border-[7px] border-[#ff0000]" />
          </th>
          <th rowSpan={2} className={TH}>吊筋</th>
          <th rowSpan={2} className={TH}>吊筋锚固</th>
        </tr>
        <tr className="h-[19px]">
          {["跨中钢筋", "右支座钢筋", "下通长筋", "下部钢筋", "侧面通长筋", "侧面原位标注筋", "拉筋"].map((h) => (
            <th key={h} className={TH}>{h}</th>
          ))}
        </tr>
      </thead>
      <tbody>
        <tr className="h-[19px]">
          <th className={`${TH} text-[11px]`}>1</th>
          <td className={`${TD} border-r-black`}>1</td>
          <td className={TD} />
          <td className={TD}>2<Rebar />20+1<Rebar />16</td>
          <td className={TD} />
          <td className={TD}>2<Rebar />25+1<Rebar />20</td>
          <td className={TD} />
          <td className={TD} />
          <td className={TD} />
          <td className={TD}>ф8@100/20</td>
          <td className={TD}>2</td>
          <td className={TD}>200</td>
          <td className={TD}>12<Rebar />8(4)</td>
          <td className={TD}>2<Rebar />12</td>
          <td className={TD}>20*d</td>
        </tr>
        <tr className="h-[19px] bg-[#a6c9ee]">
          <th className="border-b border-r border-[#c0c0c0] bg-[#ffd58c] p-0 text-[11px] font-normal text-[#5a005a]">2</th>
          <td className={`${TD} border-r-black`}>2</td>
          <td className={TD} />
          <td className={TD} />
          <td className={TD} />
          <td className={TD}>2<Rebar />14</td>
          <td className={TD} />
          <td className={TD} />
          <td className={TD} />
          <td className={TD}>ф8@100/20</td>
          <td className={TD}>2</td>
          <td className={TD} />
          <td className={`${TD} relative`}>
            <span className="absolute -inset-x-0.5 -inset-y-0.5 z-10 flex items-center border-2 border-black bg-[#c8ddf4]">
              <input aria-label="次梁加筋" className="h-full min-w-0 flex-1 bg-transparent px-0.5 outline-none" />
              <button
                type="button"
                aria-label="…"
                className="flex h-4 w-[15px] items-center justify-center gap-0.5 border border-[#a8a8a8] bg-[#e4e4e4]"
              >
                <span className="h-0.5 w-0.5 bg-black" />
                <span className="h-0.5 w-0.5 bg-black" />
                <span className="h-0.5 w-0.5 bg-black" />
              </button>
              <span className="absolute -bottom-1 -right-1 h-[5px] w-[5px] border-l border-t border-white bg-[#808080]" />
            </span>
          </td>
          <td className={TD} />
          <td className={TD} />
        </tr>
      </tbody>
    </table>
  );
}

function TablePanel() {
  return (
    <section className="flex h-[201px] shrink-0 pt-1">
      <div className="flex w-3 shrink-0 flex-col items-center">
        <button type="button" aria-label="✕" className="flex">
          <svg viewBox="0 0 10 10" className="h-[10px] w-[10px]">
            <path d="M.5.500h9v9h-9z" fill="#ddd" stroke="#333" />
            <path d="M2 2l6 6M8 2L2 8" stroke="#111" strokeWidth="1.600" />
          </svg>
        </button>
        <div className="mt-1 w-[7px] flex-1 bg-[radial-gradient(circle_at_1px_1px,#b4b4b4_1px,transparent_1.500px)] bg-[size:4px_5px]" />
      </div>
      <div className="flex min-w-0 flex-1 flex-col">
        <Bar className="pl-0.5">
          <Tool icon="copydoc" label="复制跨数据" />
          <Tool icon="paste" label="粘贴跨数据" state="disabled" />
          <div className="flex gap-1 pl-0.5">
            {["输入当前列数据", "删除当前列数据", "页面设置", "调换起始跨", "悬臂钢筋代号"].map((t) => (
              <Tool key={t} label={t} />
            ))}
          </div>
        </Bar>
        <div className="mr-px flex min-h-0 flex-1 flex-col overflow-hidden border border-[#a0a0a0] bg-white">
          <div className="min-h-0 flex-1 overflow-hidden pt-px">
            <SpanTable />
          </div>
          <div className="flex h-[17px] shrink-0 items-center bg-[#f0f0f0] px-1.5">
            <svg viewBox="0 0 7 9" className="h-[9px] w-[7px]" fill="none" stroke="#444" strokeWidth="2">
              <path d="M5.500 1L2 4.500 5.500 8" />
            </svg>
            <div className="grid h-full flex-1 grid-cols-[89fr_70fr_41fr]">
              <div className="col-start-2 h-[15px] bg-[#cdcdcd]" />
            </div>
            <svg viewBox="0 0 7 9" className="h-[9px] w-[7px]" fill="none" stroke="#444" strokeWidth="2">
              <path d="M1.500 1L5 4.500 1.500 8" />
            </svg>
          </div>
        </div>
      </div>
    </section>
  );
}

/* ---------- workspace ---------- */

function Workspace() {
  return (
    <main className="flex min-w-0 flex-1 flex-col pl-[5px]">
      <div className="flex h-[27px] shrink-0 pl-0.5">
        <Bar className="pl-0.5 pr-1">
          <Grip />
          <Tool icon="brush" label="删除" />
          <Sep />
          <Tool icon="copy" label="复制" />
          <Tool icon="mirror" label="镜像" />
          <Sep />
          <Tool icon="move" label="移动" />
          <Tool icon="rotate" label="旋转" />
          <Sep />
          <Tool icon="extend" label="延伸" />
          <Tool icon="trim" label="修剪" />
          <Sep />
          <Tool icon="breakk" label="打断" />
          <Tool icon="merge" label="合并" />
          <Tool icon="split" label="分割" state="disabled" />
          <Sep />
          <Tool icon="align" label="对齐" drop="menu" />
          <Tool icon="offset" label="偏移" />
          <Tool icon="stretch" label="拉伸" />
          <Sep />
          <Tool icon="grip" label="设置夹点" state="disabled" />
        </Bar>
      </div>
      <div className="flex h-[29px] shrink-0 gap-1 pl-0.5">
        <Bar className="pl-0.5">
          <Grip />
          <Combo value="首层" width="w-[58px]" />
          <Combo value="梁" width="w-[69px]" />
          <Combo value="梁" width="w-[69px]" />
          <Combo value="KL-2 ( 2)" width="w-[69px]" />
          <Combo value="分层1" width="w-[69px]" />
          <Sep />
          <Tool icon="props" label="属性" />
          <Tool icon="editbar" label="编辑钢筋" />
          <Tool icon="complist" label="构件列表" />
          <Tool icon="pick" label="拾取构件" />
        </Bar>
        <Bar className="pl-0.5 pr-1">
          <Grip />
          <Tool icon="twopoint" label="两点" />
          <Tool icon="parallel" label="平行" />
          <Tool icon="angle" label="点角" drop="split" />
          <Tool icon="arcaxis" label="三点辅轴" drop="split" />
          <Tool icon="brush" label="删除辅轴" />
          <Tool icon="dim" label="尺寸标注" drop="split" />
        </Bar>
      </div>
      <div className="flex h-7 shrink-0 gap-0.5 pl-0.5">
        <Bar className="min-w-0 flex-1 pl-0.5">
          <Grip />
          <Tool icon="cursor" label="选择" drop="split" />
          <Sep />
          <Tool icon="line" label="直线" />
          <Tool icon="pointlen" label="点加长度" />
          <Tool icon="arc" label="三点画弧" drop="split" />
          <Combo value="" width="w-[55px]" />
          <Tool icon="blueRect" label="矩形" />
          <Sep />
          <Tool icon="smart" label="智能布置" drop="menu" />
          <Sep />
          <Tool icon="editprop" label="修改梁段属性" />
          <Tool icon="insitu" label="原位标注" drop="split" state="checked">
            <span className="pointer-events-none absolute -left-[20px] -top-[18px] z-20 h-[58px] w-[117px] border-[7px] border-[#ff0000]" />
          </Tool>
          <Tool icon="repick" label="重提梁跨" drop="split" />
          <Tool icon="spanCopy" label="梁跨数据复制" drop="split" />
          <Tool icon="recog" label="批量识别梁支座" state="pressed" />
          <Tool icon="applyTo" label="应用到同名梁" />
          <Chevron />
        </Bar>
        <Bar className="w-8 pl-0.5">
          <Grip />
        </Bar>
      </div>
      <div className="flex min-h-0 flex-1 pr-px">
        <Canvas />
      </div>
      <div className="flex h-7 shrink-0 items-center gap-[5px] pl-0.5">
        <Bar className="pl-0.5">
          <Grip />
          <Tool icon="ortho" label="正交" />
          <Tool icon="snap" label="对象捕捉" state="checked" />
          <Tool icon="dynin" label="动态输入" />
        </Bar>
        <Bar className="pl-0.5">
          <Grip />
          <Tool icon="cross" label="交点" />
          <Tool icon="perp" label="垂点" state="checked" />
          <Tool icon="mid" label="中点" state="checked" />
          <Tool icon="vertex" label="顶点" />
          <Tool icon="coord" label="坐标" />
        </Bar>
      </div>
      <TablePanel />
    </main>
  );
}

/* ---------- status bar and taskbar ---------- */

const STAT = "flex items-center overflow-hidden whitespace-nowrap border border-[#d4d4d4] bg-linear-to-b from-white to-[#f2f2f2] pl-px";

function StatusBar() {
  return (
    <footer className="flex h-6 shrink-0 gap-0.5 pt-1 text-xs">
      <div className={`${STAT} w-[148px]`}>X=16417 Y=10922</div>
      <div className={`${STAT} w-[78px]`}>层高:4.5m</div>
      <div className={`${STAT} w-[98px]`}>底标高:-0.05m</div>
      <div className={`${STAT} w-12`}>1(1)</div>
      <div className={`${STAT} min-w-0 flex-1`}>
        按鼠标左键选择梁图元,按右键或ESC退出;可以通过回车键及shift+"→←↑"光标键在跨之间、上下输入框之间进行切换
      </div>
      <div className={`${STAT} w-[70px]`}>322.6 FPS</div>
    </footer>
  );
}

function AppButton({ label, active, running, children }: { label: string; active?: boolean; running?: boolean; children: ReactNode }) {
  return (
    <button
      type="button"
      aria-label={label}
      className={`flex h-full w-[50px] flex-col items-center justify-center ${active ? "bg-[#35454d]" : ""}`}
    >
      <svg viewBox="0 0 24 24" className="mt-[7px] h-[26px] w-[26px]">
        {children}
      </svg>
      <span className={`mt-auto h-[3px] w-10 ${running ? "bg-[#76b9ed]" : ""}`} />
    </button>
  );
}

const eShape = "M20 15c-2 5-7 6-11 4-5-3-5-10 0-13 5-2 11 0 11 7H7";

function Taskbar() {
  return (
    <div className="flex h-10 shrink-0 items-center bg-[#020b0e] text-white">
      <button type="button" aria-label="⊞" className="flex h-full w-12 items-center justify-center bg-black">
        <svg viewBox="0 0 16 16" className="h-4 w-4" fill="#fff">
          <path d="M0 2.200l6.500-.9v6.200H0zM7.300 1.200L16 0v7.500H7.300zM0 8.300h6.500v6.300L0 13.700zM7.300 8.300H16V16l-8.700-1.200z" />
        </svg>
      </button>
      <label className="flex h-full w-[344px] items-center bg-[#333333] px-2">
        <svg viewBox="0 0 24 24" className="h-6 w-6" fill="none" stroke="#f4f4f4" strokeWidth="3">
          <circle cx="12" cy="12" r="9" />
        </svg>
        <input
          aria-label="在这里输入你要搜索的内容"
          placeholder="在这里输入你要搜索的内容"
          className="ml-1 min-w-0 flex-1 bg-transparent text-sm text-white outline-none placeholder:text-[#a0a0a0]"
        />
        <svg viewBox="0 0 16 20" className="mr-1 h-5 w-4" fill="none" stroke="#9a9a9a" strokeWidth="1.300">
          <rect x="5" y="1.500" width="6" height="11" rx="3" />
          <path d="M3 10v2c0 4 10 4 10 0v-2M8 15v3M5 18.500h6" />
        </svg>
      </label>
      <div className="flex h-full">
        <AppButton label="⧉">
          <path d="M7 6h10v12H7zM5 7.500H3v9h2M19 7.500h2v9h-2" fill="none" stroke="#fff" strokeWidth="1.200" />
        </AppButton>
        <AppButton label="✤">
          <g fill="#ececec">
            <path d="M11.500 11.500C5 13 2 10 3 6s7-5 8.500 0zM12.500 11.500c-1.500-6.500 1.500-9.500 5.500-8.500s5 7 0 8.500zM12.500 12.500c6.500-1.500 9.500 1.500 8.500 5.500s-7 5-8.500 0zM11.500 12.500c1.500 6.500-1.500 9.500-5.500 8.500s-5-7 0-8.500z" />
          </g>
        </AppButton>
        <AppButton label="e">
          <path d={eShape} fill="none" stroke="#f4f4f4" strokeWidth="3" />
          <path d="M3 20C-2 15 12 2 20 3" fill="none" stroke="#f4f4f4" strokeWidth="1.500" />
        </AppButton>
        <AppButton label="G">
          <path d="M20 3c-3 3-5 1-9 2-7 2-8 10-3 13 5 4 12 0 11-6h-6c-1 3 1 4 3 3M18 7c-5-1-9 1-9 5s4 4 6 3" fill="none" stroke="#e0e0e0" strokeWidth="1.200" />
        </AppButton>
        <AppButton label="Edge">
          <path d="M3 10C4 5 8 2.500 12.500 2.500c6 0 9 4 9 9v2H9c0 4 7 5.500 11 2.500v4.500c-6 3-14 1-14-6.500 0-3 1.500-5.500 4-7-4 0-6 1.500-7 3zM9.200 10.500h7c0-4.500-6.500-4.500-7 0z" fill="#0a78d7" />
        </AppButton>
        <AppButton label="IE">
          <path d={eShape} fill="none" stroke="#3ab4f0" strokeWidth="4" />
          <path d="M3 21C-3 16 12 0 21 3c2 1 1 3 0 5" fill="none" stroke="#f4cc3c" strokeWidth="1.800" />
        </AppButton>
        <AppButton label="📁">
          <path d="M2 4h7l2 2h11v14H2z" fill="#f8dc80" />
          <path d="M6 12h12v8h-3v-4H9v4H6z" fill="#3a9fe0" />
        </AppButton>
        <AppButton label="G" running>
          <path d="M22 1c-1 4-4 4-8 4-6 1-8 8-4 11 3 2 7 1 7-3h4c1 7-6 12-12 9C0 18 0 7 7 4c5-2 10 1 15-3z" fill="#2aa0f0" />
          <path d="M11 13c0-3 5-4 7-2" fill="none" stroke="#2aa0f0" strokeWidth="2" />
        </AppButton>
        <AppButton label="e" running>
          <circle cx="12" cy="12" r="10" fill="#4cae2c" />
          <path d="M17 14c-2 4-9 4-10-1-1-6 9-8 10-1H8" fill="none" stroke="#fff" strokeWidth="2.400" />
          <path d="M2 17C2 10 12 2 21 6" fill="none" stroke="#e8f8d8" />
        </AppButton>
        <AppButton label="GGJ2013" active running>
          <g transform="scale(1.500)">{ggj}</g>
        </AppButton>
      </div>
      <div className="ml-auto flex h-full items-center text-xs">
        <span className="mr-4">链接</span>
        <span className="mr-4 text-center leading-4">
          41%
          <br />
          CPU使用
        </span>
        <svg viewBox="0 0 190 24" className="h-6 w-[190px]" fill="none" stroke="#fff" strokeWidth="1.300">
          <path d="M5 15l5-5 5 5" />
          <circle cx="34" cy="12" r="8" fill="#f0a050" stroke="none" />
          <path d="M29 10h3l3-3v10l-3-3h-3zM37 9c2 2 2 4 0 6" fill="#fff" strokeWidth=".8" />
          <path d="M54 9.500h10v7H54zM65 12v3M53 5v3h4V5M55 9v3" strokeWidth="1.500" />
          <path d="M56 12h7v3h-7z" fill="#fff" stroke="none" />
          <path d="M78 18c0-5 4-9 9-9M81 18c0-3 3-6 6-6M76 16c0-6 5-10 11-10M84 18c0-2 1-3 3-3" strokeWidth="1" />
          <path d="M98 10h3l4-4v12l-4-4h-3zM107 9c2 2 2 4 0 6M110 7c3 3 3 7 0 10M113 6c3 4 3 8 0 12" strokeWidth="1" />
          <path d="M123.500 6.500h21v12h-21zM128 15.500h12" strokeWidth="1" />
          <path d="M126 9.500h16M126 12.500h16" strokeDasharray="1.500 1" strokeWidth="1.500" />
          <path d="M156 18l5-12 5 12M158 14h6" strokeWidth="1.700" />
        </svg>
        <span className="-ml-1 mr-3">
          <Icon name="sogou" />
        </span>
        <time className="w-[68px] text-center leading-[18px]">
          12:23
          <br />
          2018/5/15
        </time>
        <button type="button" aria-label="1" className="relative ml-4 mr-4 flex h-6 w-6">
          <svg viewBox="0 0 24 24" className="h-6 w-6">
            <path d="M2 4h15v12h-6l-3 4v-4H2z" fill="#fff" />
            <path d="M5 7h9M5 10h9M5 13h5" stroke="#111" />
            <circle cx="17" cy="17" r="7" fill="#222" stroke="#999" />
          </svg>
          <span className="absolute bottom-0 right-1 text-[11px] font-bold leading-[14px]">1</span>
        </button>
      </div>
    </div>
  );
}

export default function App() {
  return (
    <div className="flex h-screen flex-col overflow-hidden bg-[#f0f0f0] font-['Noto_Sans','Noto_Sans_CJK_SC',sans-serif] text-xs leading-4 text-black">
      <TitleBar />
      <MenuBar />
      <MainBars />
      <div className="flex min-h-0 flex-1">
        <NavPanel />
        <Workspace />
      </div>
      <StatusBar />
      <Taskbar />
    </div>
  );
}
